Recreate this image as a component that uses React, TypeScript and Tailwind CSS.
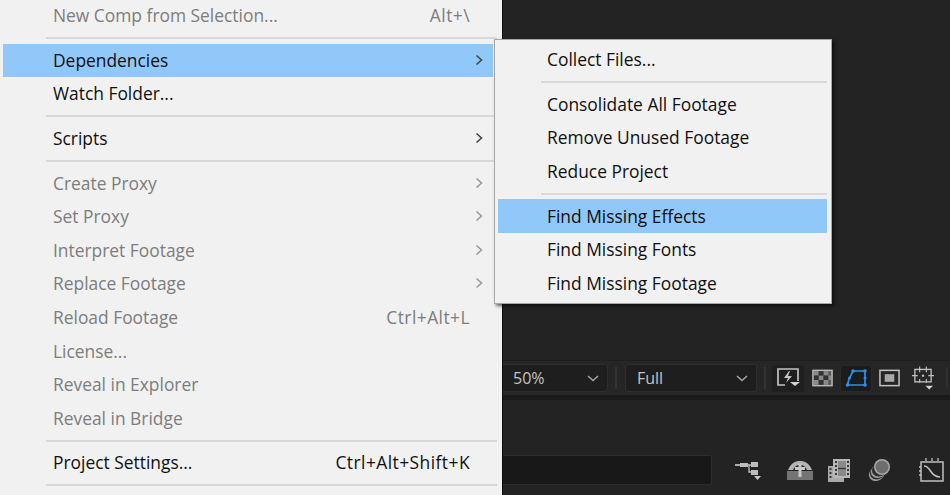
const font = "font-['Open_Sans','Noto_Sans',sans-serif]";

const Chevron = ({ muted }: { muted?: boolean }) => (
  <svg width="8" height="12" viewBox="0 0 8 12" className="shrink-0" fill="none">
    <path d="M1.5 1.5 6.5 6 1.5 10.5" stroke={muted ? '#9a9a9a' : '#444444'} strokeWidth="1.6" />
  </svg>
);

const Sep = () => (
  <div className="flex h-[11px] items-center pl-[46px] pr-[5px]">
    <div className="h-[2px] w-full bg-[#d8d8d8]" />
  </div>
);

const Row = ({
  label,
  shortcut,
  muted,
  active,
  arrow,
}: {
  label: string;
  shortcut?: string;
  muted?: boolean;
  active?: boolean;
  arrow?: boolean;
}) => (
  <div
    className={`flex h-[33.6px] w-[490px] ml-[3px] items-center justify-between pb-[1px] pl-[50px] pr-[10px] ${
      active ? 'bg-[#90c8f9]' : ''
    } ${muted ? 'text-[#7d7d7d]' : 'text-[#101010]'}`}
  >
    <span>{label}</span>
    <span className="flex items-center">
      {shortcut && <span className="mr-[13px] tracking-[0.45px]">{shortcut}</span>}
      {arrow && <Chevron muted={muted} />}
    </span>
  </div>
);

const SubRow = ({ label, active }: { label: string; active?: boolean }) => (
  <div className={`flex h-[33.6px] items-center pb-[1px] pl-[49px] ${active ? 'bg-[#90c8f9]' : ''}`}>{label}</div>
);

const SubSep = () => (
  <div className="flex h-[11px] items-center pl-[43px]">
    <div className="h-[2px] w-full bg-[#d8d8d8]" />
  </div>
);

const MainMenu = () => (
  <div className={`h-[495px] w-[502px] shrink-0 overflow-hidden bg-[#f1f1f1] text-[17.4px] ${font}`}>
    <div className="-mt-px">
      <Row label="New Comp from Selection..." shortcut="Alt+\" muted />
      <Sep />
      <Row label="Dependencies" active arrow />
      <Row label="Watch Folder..." />
      <Sep />
      <Row label="Scripts" arrow />
      <Sep />
      <Row label="Create Proxy" muted arrow />
      <Row label="Set Proxy" muted arrow />
      <Row label="Interpret Footage" muted arrow />
      <Row label="Replace Footage" muted arrow />
      <Row label="Reload Footage" shortcut="Ctrl+Alt+L" muted />
      <Row label="License..." muted />
      <Row label="Reveal in Explorer" muted />
      <Row label="Reveal in Bridge" muted />
      <Sep />
      <Row label="Project Settings..." shortcut="Ctrl+Alt+Shift+K" />
      <Sep />
    </div>
  </div>
);

const SubMenu = () => (
  <div
    className={`absolute left-[494px] top-[39px] w-[338px] border border-[#a8a8a8] bg-[#f1f1f1] pb-[3px] pl-[3px] pr-[4px] pt-[3px] text-[17.4px] text-[#101010] shadow-[2px_2px_3px_rgba(0,0,0,0.6)] ${font}`}
  >
    <SubRow label="Collect Files..." />
    <SubSep />
    <SubRow label="Consolidate All Footage" />
    <SubRow label="Remove Unused Footage" />
    <SubRow label="Reduce Project" />
    <SubSep />
    <SubRow label="Find Missing Effects" active />
    <SubRow label="Find Missing Fonts" />
    <SubRow label="Find Missing Footage" />
  </div>
);

const Select = ({ label, className }: { label: string; className: string }) => (
  <div
    className={`flex h-[28px] items-center justify-between rounded-[3px] border border-[#2e2e2e] bg-[#1e1e1e] text-[16px] text-[#c4c4c4] ${className} ${font}`}
  >
    <span>{label}</span>
    <svg width="12" height="7" viewBox="0 0 12 7" fill="none">
      <path d="M1 1l5 4.5L11 1" stroke="#a8a8a8" strokeWidth="1.4" />
    </svg>
  </div>
);

const Divider = () => <div className="h-[22px] w-[2px] bg-[#333333]" />;

const Toolbar = () => (
  <div className="flex h-[35px] items-center border-t border-[#1f1f1f] bg-[#262626]">
    <Select label="50%" className="w-[105px] rounded-l-none border-l-0 pl-[10px] pr-[8px]" />
    <div className="ml-[7px] mr-[8px]">
      <Divider />
    </div>
    <Select label="Full" className="w-[132px] pl-[11px] pr-[8px]" />
    <div className="ml-[7px] mr-[6px]">
      <Divider />
    </div>
    <div className="flex h-[27px] w-[32px] items-center justify-center rounded-[3px] bg-[#1f1f1f]">
      <svg width="23" height="20" viewBox="0 0 23 20" fill="none" className="blur-[0.4px]">
        <path d="M8 17H1V1h20v12" stroke="#c4c4c4" strokeWidth="1.7" />
        <path d="M12 3 7 10h4l-2 5 6-7h-4l2-5z" fill="#c4c4c4" />
        <path d="M13 14h10l-5 4z" fill="#d4d4d4" />
      </svg>
    </div>
    <div className="ml-[8px] flex w-[21px] justify-center">
      <svg width="22" height="18" viewBox="0 0 22 18" className="blur-[0.4px]">
        <rect x="1" y="1" width="20" height="16" fill="#5a5a5a" stroke="#b8b8b8" strokeWidth="1.6" />
        <path d="M2 2h5v4.500H2zM12 2h5v4.500h-5zM7 6.500h5V11H7zM17 6.500h3V11h-3zM2 11h5v5H2zM12 11h5v5h-5z" fill="#8a8a8a" />
        <path d="M7 2h5v4.500H7zM2 6.500h5V11H2zM12 6.500h5V11h-5zM7 11h5v5H7z" fill="#333333" />
      </svg>
    </div>
    <div className="ml-[7px] flex h-[27px] w-[32px] items-center justify-center rounded-[3px] border border-[#2a2a2a] bg-[#1c1c1c]">
      <svg width="23" height="20" viewBox="0 0 23 20" fill="none" className="blur-[0.3px]">
        <path d="M8 3h12v14H2.500l1.500-6z" stroke="#2f8fe8" strokeWidth="1.700" />
        <g fill="#2f8fe8">
          <circle cx="8" cy="3" r="1.800" />
          <circle cx="20" cy="3" r="1.800" />
          <circle cx="20" cy="17" r="1.800" />
          <circle cx="2.500" cy="17" r="1.800" />
          <circle cx="4.500" cy="10" r="1.500" />
          <circle cx="20" cy="10" r="1.500" />
        </g>
      </svg>
    </div>
    <div className="ml-[7px] flex w-[21px] justify-center">
      <svg width="22" height="18" viewBox="0 0 22 18" fill="none" className="blur-[0.4px]">
        <rect x="1" y="1" width="20" height="16" stroke="#c0c0c0" strokeWidth="1.6" />
        <rect x="6" y="5" width="10" height="8" fill="#a8a8a8" />
      </svg>
    </div>
    <div className="ml-[12px] flex w-[22px] justify-center">
      <svg width="23" height="25" viewBox="0 0 23 25" fill="none" className="blur-[0.4px]">
        <rect x="3" y="3" width="17" height="13" stroke="#c0c0c0" strokeWidth="1.4" />
        <path d="M8 0v6M15 0v6M0 9.500h6M17 9.500h6M8 13v4M15 13v4" stroke="#c0c0c0" strokeWidth="1.2" />
        <circle cx="11.500" cy="9.500" r="1.300" fill="#c0c0c0" />
        <path d="M14 20h8l-4 4z" fill="#d0d0d0" />
      </svg>
    </div>
    <div className="ml-[12px]">
      <div className="h-[22px] w-[2px] bg-[#2e2e2e]" />
    </div>
  </div>
);

const BottomRow = () => (
  <div className="flex h-[30px] items-center">
    <div className="h-[30px] w-[209px] rounded-r-[3px] border border-l-0 border-[#2c2c2c] bg-[#181818]" />
    <div className="ml-[23px] w-[27px]">
      <svg width="27" height="19" viewBox="0 0 27 19" fill="none" className="blur-[0.4px]">
        <path d="M0 4h6" stroke="#bdbdbd" strokeWidth="1.800" />
        <rect x="5" y="2" width="8" height="4" fill="#bdbdbd" />
        <rect x="16" y="1" width="7" height="5" fill="#bdbdbd" />
        <rect x="16" y="9" width="7" height="5" fill="#bdbdbd" />
        <path d="M13 4h3M14 4v7h2" stroke="#bdbdbd" strokeWidth="1.300" />
        <path d="M19 15h7l-3.500 4z" fill="#c8c8c8" />
      </svg>
    </div>
    <div className="ml-[25px] w-[26px]">
      <svg width="26" height="20" viewBox="0 0 26 20" fill="none" className="blur-[0.4px]">
        <rect x="0" y="11" width="26" height="9" fill="#747474" />
        <path d="M1 10C4 3 8 1 13 1s9 2 12 9l-5 0C18 6 16 5 13 5s-5 1-7 5z" fill="#b4b4b4" />
        <rect x="11.500" y="4" width="3" height="13" fill="#c8c8c8" />
        <rect x="8" y="7" width="10" height="3" fill="#c8c8c8" />
      </svg>
    </div>
    <div className="ml-[15px] w-[22px]">
      <svg width="22" height="23" viewBox="0 0 22 23" className="blur-[0.4px]">
        <path d="M0 7h5v11h11v5H0z" fill="#a8a8a8" />
        <rect x="5" y="0" width="17" height="19" fill="#b8b8b8" />
        <rect x="10" y="2" width="8" height="6" fill="#8a8a8a" />
        <rect x="10" y="11" width="8" height="6" fill="#8a8a8a" />
        <rect x="10" y="8.500" width="8" height="2" fill="#3a3a3a" />
        <path d="M1.500 9h2v2h-2zM1.500 13h2v2h-2zM1.500 17h2v2h-2zM7 2h2v2H7zM7 6h2v2H7zM7 10h2v2H7zM7 14h2v2H7zM19 2h2v2h-2zM19 6h2v2h-2zM19 10h2v2h-2zM19 14h2v2h-2z" fill="#3a3a3a" />
      </svg>
    </div>
    <div className="ml-[18px] w-[22px]">
      <svg width="22" height="22" viewBox="0 0 22 22" className="blur-[0.4px]">
        <ellipse cx="9" cy="14.500" rx="8.500" ry="7" transform="rotate(-35 9 14.500)" fill="#a0a0a0" />
        <ellipse cx="10" cy="13" rx="8.500" ry="7" transform="rotate(-35 10 13)" fill="#303030" />
        <ellipse cx="11" cy="11.500" rx="8.500" ry="7" transform="rotate(-35 11 11.500)" fill="#a0a0a0" />
        <ellipse cx="12" cy="10" rx="8.500" ry="7" transform="rotate(-35 12 10)" fill="#303030" />
        <circle cx="14" cy="8" r="8" fill="#a8a8a8" />
        <circle cx="14" cy="8" r="6.500" fill="#6e6e6e" />
      </svg>
    </div>
    <div className="ml-[29px] w-[25px]">
      <svg width="25" height="24" viewBox="0 0 25 24" fill="none" className="blur-[0.4px]">
        <rect x="2" y="4" width="22" height="19" stroke="#c0c0c0" strokeWidth="1.500" />
        <path d="M7 0v3M13 0v3M19 0v3M0 9h2M0 13h2M0 17h2" stroke="#c0c0c0" strokeWidth="1.300" />
        <path d="M5 8c7 0 6 11 16 11" stroke="#c0c0c0" strokeWidth="1.600" />
      </svg>
    </div>
  </div>
);

export default function App() {
  return (
    <div className="relative flex h-[495px] w-[950px] overflow-hidden bg-[#232323]">
      <MainMenu />
      <div className="w-px bg-[#0c0c0c]" />
      <div className="flex min-w-0 flex-1 flex-col">
        <div className="h-[360px]" />
        <Toolbar />
        <div className="h-[5px] bg-[#1a1a1a]" />
        <div className="h-[55px]" />
        <BottomRow />
      </div>
      <SubMenu />
    </div>
  );
}
